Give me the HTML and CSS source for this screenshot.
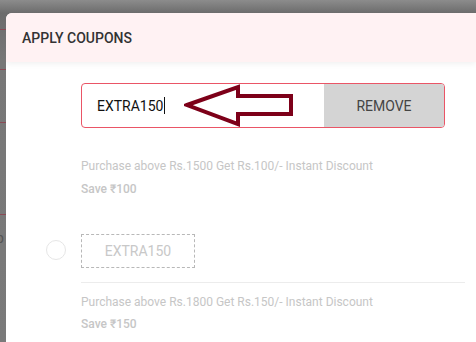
FILE: index.html
```html
<!DOCTYPE html>
<html lang="en">
<head>
  <meta charset="UTF-8" />
  <meta name="viewport" content="width=device-width, initial-scale=1" />
  <title>Apply Coupons</title>
  <link rel="stylesheet" href="styles.css">
</head>
<body>

  <div class="backdrop">
    <span class="behind-line l1"></span>
    <span class="behind-line l2"></span>
    <span class="behind-line l3"></span>
    <span class="behind-line l4"></span>
    <span class="behind-letter">p</span>
  </div>

  <div class="modal">
    <div class="modal-header">APPLY COUPONS</div>

    <div class="modal-body">
      <div class="coupon">
        <span></span>
        <div class="coupon-main">
          <div class="coupon-input">
            <span class="code-text">EXTRA150<span class="caret"></span></span>
            <button class="remove-btn">REMOVE</button>
            <svg class="pointer-arrow" width="112" height="44" viewBox="0 0 112 44">
              <path d="M3 21 L54 3 L54 12 L107 12 L107 30 L54 30 L54 40 Z" fill="none" stroke="#7d0019" stroke-width="4" stroke-linejoin="miter"></path>
            </svg>
          </div>
          <p class="coupon-desc">Purchase above Rs.1500 Get Rs.100/- Instant Discount</p>
          <p class="coupon-save">Save ₹100</p>
        </div>
      </div>

      <div class="coupon second">
        <span class="radio"></span>
        <div class="coupon-main">
          <div class="coupon-code">EXTRA150</div>
          <hr class="divider">
          <p class="coupon-desc">Purchase above Rs.1800 Get Rs.150/- Instant Discount</p>
          <p class="coupon-save">Save ₹150</p>
        </div>
      </div>
    </div>
  </div>

</body>
</html>
```

FILE: styles.css
```css
* {
  margin: 0;
  padding: 0;
  box-sizing: border-box;
  font-family: Roboto, "Liberation Sans", sans-serif;
}
body {
  height: 342px;
  overflow: hidden;
  background: linear-gradient(to bottom, #8c8c8c 0px, #6c6c6c 13px, #777777 60px, #7a7a7a 100%);
  position: relative;
}
.backdrop {
  position: absolute;
  left: 0;
  top: 0;
  width: 6px;
  height: 100%;
}
.behind-line {
  position: absolute;
  left: 0;
  width: 6px;
  height: 1px;
  background: #8a4a55;
}
.l1 { top: 29px; }
.l2 { top: 69px; }
.l3 { top: 122px; }
.l4 { top: 214px; }
.behind-letter {
  position: absolute;
  left: -4px;
  top: 230px;
  font-size: 14px;
  color: #555;
}
.modal {
  margin: 13px 0 0 6px;
  height: 329px;
  background: #fff;
  border-radius: 6px 0 0 0;
  overflow: hidden;
}
.modal-header {
  height: 49px;
  display: flex;
  align-items: center;
  padding-left: 16px;
  background: #fff2f3;
  color: #333;
  font-size: 14px;
  font-weight: 500;
  box-shadow: 0 2px 6px rgba(0, 0, 0, 0.06);
  position: relative;
}
.modal-body {
  padding: 21px 11px 0 40px;
}
.coupon {
  display: grid;
  grid-template-columns: 35px 1fr;
}
.coupon-input {
  position: relative;
  display: flex;
  width: 364px;
  height: 45px;
  border: 1px solid #ea5566;
  border-radius: 4px;
  overflow: hidden;
}
.code-text {
  flex: 1;
  display: flex;
  align-items: center;
  padding-left: 15px;
  font-size: 14px;
  color: #111;
}
.caret {
  display: inline-block;
  width: 1px;
  height: 17px;
  background: #111;
  margin-left: 1px;
}
.remove-btn {
  width: 120px;
  border: none;
  background: #d4d4d4;
  color: #444;
  font-size: 14px;
}
.pointer-arrow {
  position: absolute;
  left: 102px;
  top: 0px;
}
.coupon-desc {
  margin-top: 29px;
  font-size: 12px;
  line-height: 18px;
  color: #c6c6c6;
}
.coupon-save {
  margin-top: 5px;
  font-size: 12px;
  font-weight: 500;
  line-height: 18px;
  color: #c6c6c6;
}
.second {
  margin-top: 36px;
}
.radio {
  width: 20px;
  height: 20px;
  margin-top: 6px;
  border: 1px solid #e6e6e6;
  border-radius: 50%;
}
.coupon-code {
  width: 114px;
  height: 34px;
  display: flex;
  align-items: center;
  justify-content: center;
  border: 1px dashed #b8b8b8;
  color: #c8c8c8;
  font-size: 14px;
}
.divider {
  border: none;
  border-top: 1px solid #ececec;
  margin-top: 14px;
}
.second .coupon-desc {
  margin-top: 10px;
}
.second .coupon-save {
  margin-top: 4px;
}
```
